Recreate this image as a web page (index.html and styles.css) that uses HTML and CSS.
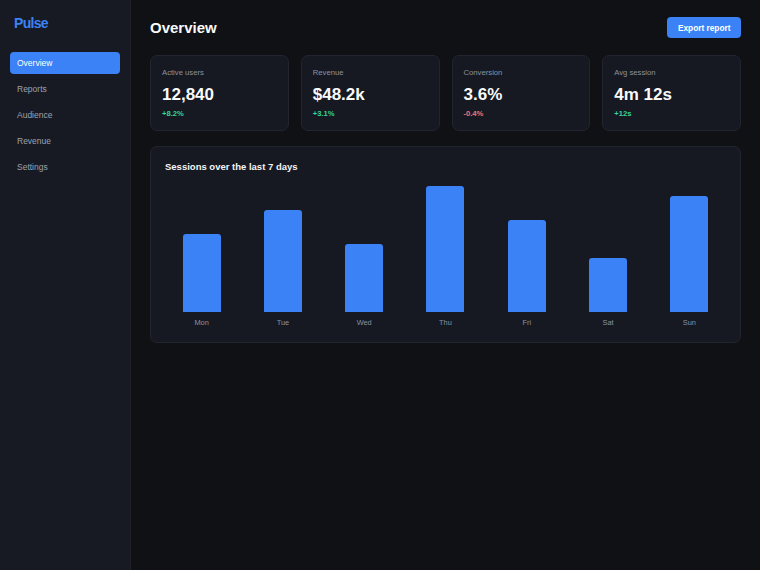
FILE: index.html
```html
<!DOCTYPE html>
<html lang="en">
<head>
<meta charset="utf-8">
<title>Pulse — Overview</title>
<link rel="stylesheet" href="styles.css">
</head>
<body>
<div class="app">
  <aside class="sidebar">
    <div class="logo">Pulse</div>
    <nav class="nav">
      <a class="nav-item active">Overview</a>
      <a class="nav-item">Reports</a>
      <a class="nav-item">Audience</a>
      <a class="nav-item">Revenue</a>
      <a class="nav-item">Settings</a>
    </nav>
  </aside>
  <main class="main">
    <header class="header">
      <h1 class="title">Overview</h1>
      <button class="btn">Export report</button>
    </header>
    <section class="stats">
      <div class="card stat">
        <div class="stat-label">Active users</div>
        <div class="stat-value">12,840</div>
        <div class="stat-change up">+8.2%</div>
      </div>
      <div class="card stat">
        <div class="stat-label">Revenue</div>
        <div class="stat-value">$48.2k</div>
        <div class="stat-change up">+3.1%</div>
      </div>
      <div class="card stat">
        <div class="stat-label">Conversion</div>
        <div class="stat-value">3.6%</div>
        <div class="stat-change down">-0.4%</div>
      </div>
      <div class="card stat">
        <div class="stat-label">Avg session</div>
        <div class="stat-value">4m 12s</div>
        <div class="stat-change up">+12s</div>
      </div>
    </section>
    <section class="card chart-card">
      <h2 class="chart-title">Sessions over the last 7 days</h2>
      <div class="chart">
        <div class="col"><div class="bar-wrap"><div class="bar" style="height:78px"></div></div><span class="day">Mon</span></div>
        <div class="col"><div class="bar-wrap"><div class="bar" style="height:102px"></div></div><span class="day">Tue</span></div>
        <div class="col"><div class="bar-wrap"><div class="bar" style="height:68px"></div></div><span class="day">Wed</span></div>
        <div class="col"><div class="bar-wrap"><div class="bar" style="height:126px"></div></div><span class="day">Thu</span></div>
        <div class="col"><div class="bar-wrap"><div class="bar" style="height:92px"></div></div><span class="day">Fri</span></div>
        <div class="col"><div class="bar-wrap"><div class="bar" style="height:54px"></div></div><span class="day">Sat</span></div>
        <div class="col"><div class="bar-wrap"><div class="bar" style="height:116px"></div></div><span class="day">Sun</span></div>
      </div>
    </section>
  </main>
</div>
</body>
</html>
```
FILE: styles.css
```css
* { box-sizing: border-box; }

html, body {
  margin: 0;
  height: 100%;
  background: #0f1115;
  color: #f3f4f6;
  font-family: "Liberation Sans", Arial, sans-serif;
}

.app {
  display: flex;
  min-height: 100vh;
}

/* Sidebar */
.sidebar {
  width: 131px;
  flex-shrink: 0;
  background: #171a23;
  border-right: 1px solid #1d2029;
  padding: 15px 10px;
}

.logo {
  font-size: 14px;
  font-weight: 700;
  color: #3b82f6;
  letter-spacing: -0.7px;
  padding-left: 4px;
  line-height: 16px;
  margin-bottom: 21px;
}

.nav {
  display: flex;
  flex-direction: column;
  gap: 4px;
}

.nav-item {
  display: block;
  height: 22px;
  line-height: 22px;
  padding: 0 7px;
  border-radius: 4px;
  font-size: 8.5px;
  color: #9ca3af;
}

.nav-item.active {
  background: #3b82f6;
  color: #ffffff;
}

/* Main area */
.main {
  flex: 1;
  padding: 17px 19px;
}

.header {
  display: flex;
  align-items: center;
  justify-content: space-between;
  height: 21px;
  margin-bottom: 17px;
}

.title {
  margin: 0;
  font-size: 15px;
  font-weight: 700;
  color: #f9fafb;
}

.btn {
  height: 21px;
  padding: 0 10.5px;
  border: 0;
  border-radius: 4px;
  background: #3b82f6;
  color: #ffffff;
  font-family: inherit;
  font-size: 8.3px;
  font-weight: 700;
}

.card {
  background: #161922;
  border: 1px solid #22252f;
  border-radius: 7px;
}

.stats {
  display: grid;
  grid-template-columns: repeat(4, 1fr);
  gap: 12px;
  margin-bottom: 15px;
}

.stat {
  height: 76px;
  padding: 12px 11px;
}

.stat-label {
  font-size: 7.7px;
  color: #8b93a1;
  line-height: 10px;
}

.stat-value {
  margin-top: 7px;
  font-size: 17px;
  font-weight: 700;
  line-height: 20px;
  color: #f9fafb;
}

.stat-change {
  margin-top: 4px;
  font-size: 7.6px;
  font-weight: 700;
  line-height: 10px;
}

.up { color: #34d399; }
.down { color: #f87171; }

/* Chart */
.chart-card {
  padding: 13px 14px 14px;
}

.chart-title {
  margin: 0 0 13px;
  font-size: 9.5px;
  font-weight: 700;
  line-height: 13px;
  color: #f3f4f6;
}

.chart {
  display: flex;
  gap: 8px;
}

.col {
  flex: 1;
  display: flex;
  flex-direction: column;
  align-items: center;
}

.bar-wrap {
  height: 126px;
  display: flex;
  align-items: flex-end;
}

.bar {
  width: 38px;
  background: #3b82f6;
  border-radius: 3px 3px 0 0;
}

.day {
  margin-top: 6px;
  font-size: 7.4px;
  line-height: 10px;
  color: #8b93a1;
}
```
